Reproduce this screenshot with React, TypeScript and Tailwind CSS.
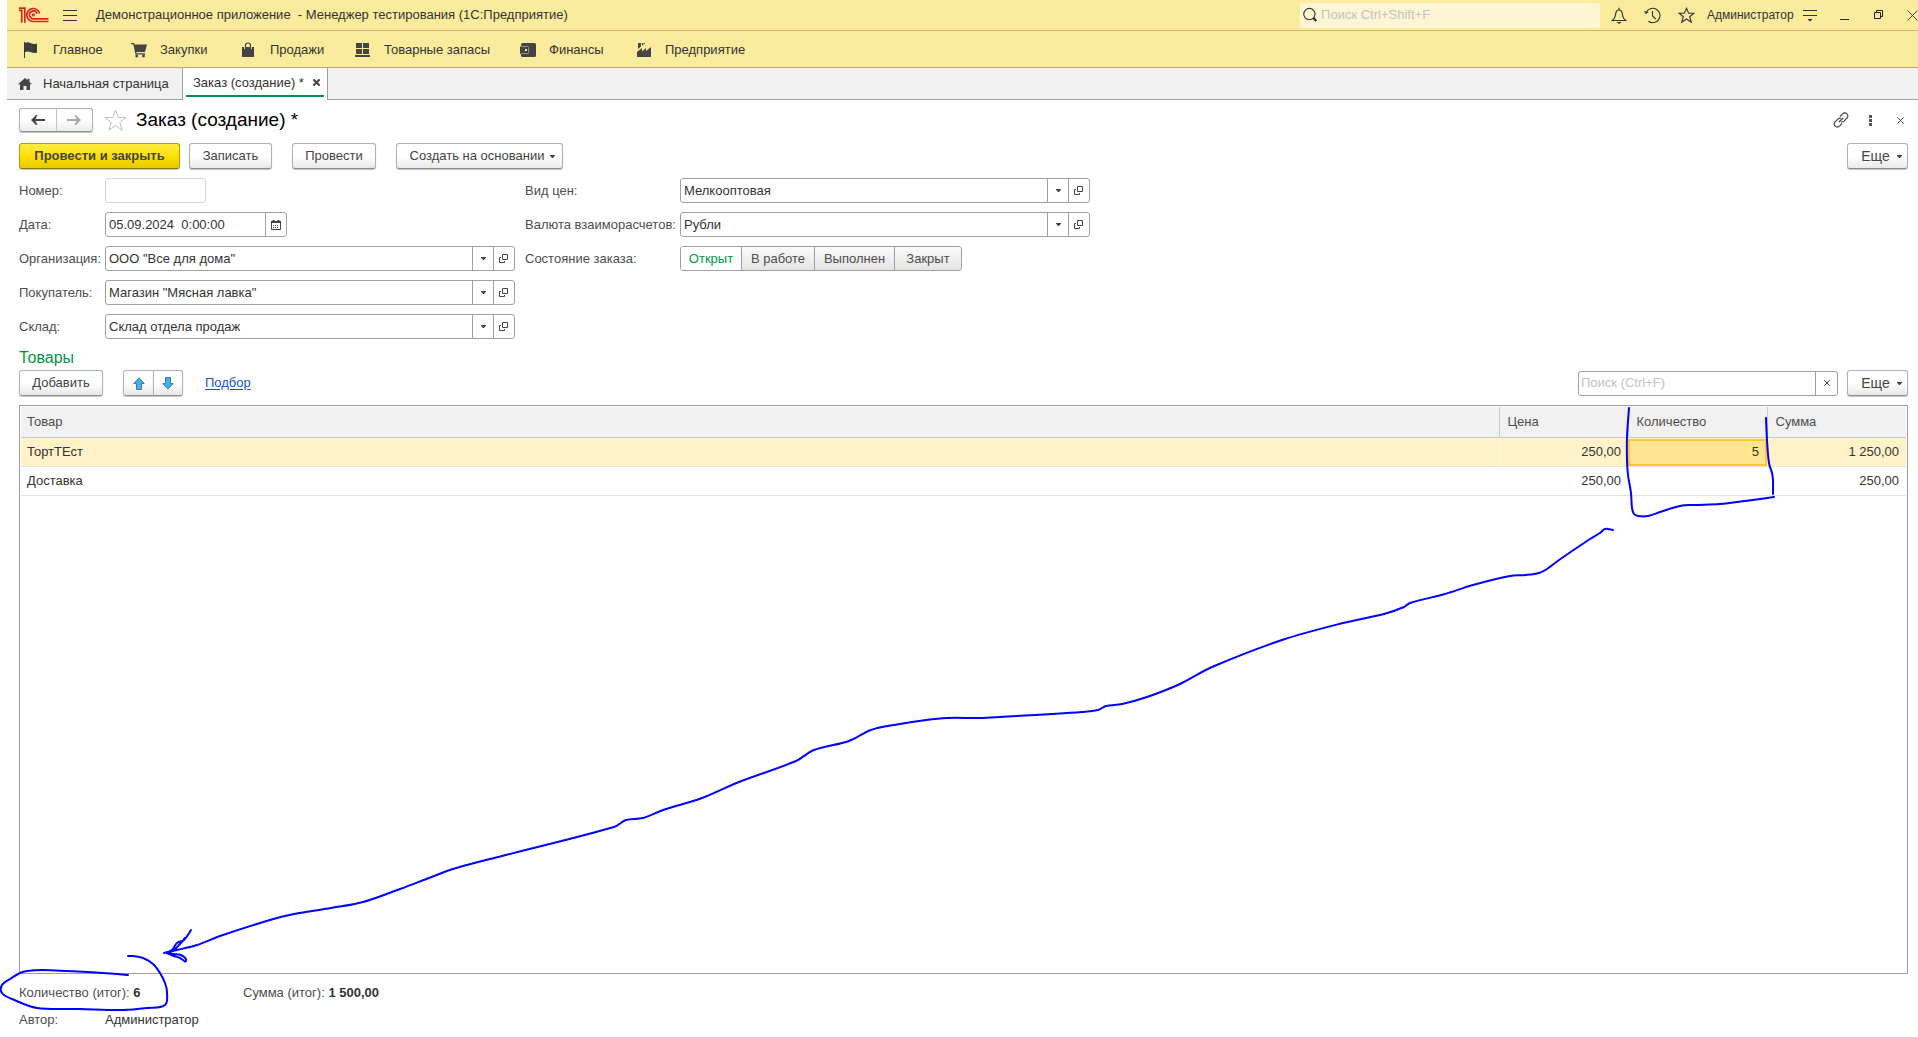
import { useId, useState, type ReactNode } from "react";

const BUTTON =
  "flex h-[26px] items-center justify-center rounded-[3px] border border-[#b0b0b0] border-b-[#8c8c8c] bg-linear-to-b from-white from-50% to-[#e9e9e9] text-[#444] shadow-[0_1px_1px_#c4c4c4]";

function Caret() {
  return (
    <svg width="5" height="3" viewBox="0 0 5 3" fill="#444" aria-hidden="true">
      <path d="M0 0h5v.6L3 3H2L0 .6z" />
    </svg>
  );
}

function OpenIcon() {
  return (
    <svg width="10" height="10" viewBox="0 0 10 10" fill="none" stroke="#444" aria-hidden="true">
      <path d="M3.500 .5h5v5h-5zM2 3.500H.5v5h5V7" />
    </svg>
  );
}

function CrossIcon({ size, width = 1 }: { size: number; width?: number }) {
  return (
    <svg width={size} height={size} viewBox="0 0 10 10" stroke="#444" strokeWidth={(width * 10) / size} aria-hidden="true">
      <path d="M.5 .5l9 9M9.500 .5l-9 9" />
    </svg>
  );
}

function Logo() {
  return (
    <svg width="30" height="16" viewBox="0 0 30 16" fill="none" stroke="#d9261c" strokeWidth="1.700" aria-hidden="true">
      <path d="M0 3.300h3.400M2.700 3v12.800M0 1.100h5.800v14.700" />
      <path d="M20.600 6.500A6.500 6.500 0 1 0 14.500 14.500H29.500" />
      <path d="M18 6.700A3.900 3.900 0 1 0 14.500 11.800H29.500" />
      <circle cx="14.400" cy="7.800" r="1" strokeWidth="1.200" />
    </svg>
  );
}

const FlagIcon = () => (
  <svg width="16" height="16" viewBox="0 0 16 16" fill="#3d3d3d" aria-hidden="true">
    <path d="M0 0h1v16H0z" />
    <path d="M1 1c2-1.200 4-.8 6 .2s4 .9 6 .2v9c-2 1-4 .8-6-.1s-4-1.200-6 0z" />
  </svg>
);

const CartIcon = () => (
  <svg width="16" height="16" viewBox="0 0 16 16" fill="#444" aria-hidden="true">
    <path d="M0 1h3.200l.5 1.500H16l-2 7.500H5.300l.3 1.200H14v1.200H4.500L2.300 2.300H0z" />
    <circle cx="5.700" cy="14" r="1.400" />
    <circle cx="12.500" cy="14" r="1.400" />
  </svg>
);

const BagIcon = () => (
  <svg width="16" height="16" viewBox="0 0 16 16" aria-hidden="true">
    <path d="M1 5h2v2h1V5h6v2h1V5h2v10H1z" fill="#444" />
    <path d="M4.500 7V3.500Q4.500 1 7 1t2.500 2.500V7" fill="none" stroke="#444" strokeWidth="1.200" />
  </svg>
);

const StockIcon = () => (
  <svg width="16" height="16" viewBox="0 0 16 16" fill="#444" aria-hidden="true">
    <path d="M1 1h6v5H1zM8 1h6v5H8zM1 7h6v5H1zM8 7h6v5H8zM0 13h15v2H0z" />
  </svg>
);

const WalletIcon = () => (
  <svg width="16" height="16" viewBox="0 0 16 16" aria-hidden="true">
    <rect x="1" y="1" width="15" height="14" rx="1.500" fill="#444" />
    <path d="M0 4h9v8H0z" fill="#444" />
    <path d="M0 4.500h7.500q1 0 1 1v5q0 1-1 1H1" fill="none" stroke="#b5ab7c" strokeWidth=".8" />
    <path d="M5 7h2v2H5z" fill="#fbeb9d" />
  </svg>
);

const FactoryIcon = () => (
  <svg width="16" height="16" viewBox="0 0 16 16" fill="#444" aria-hidden="true">
    <path d="M1 15V10l5-4v3.500L10 6v3l5-4v10z" />
    <path d="M2 1h3v3.500L2 7zM6 1h1.500v1.500L6 3.800zM8 1h1.500L8 2.300z" />
  </svg>
);

const SECTIONS: { name: string; icon: ReactNode; width: string }[] = [
  { name: "Главное", icon: <FlagIcon />, width: "w-[107px]" },
  { name: "Закупки", icon: <CartIcon />, width: "w-[110px]" },
  { name: "Продажи", icon: <BagIcon />, width: "w-[114px]" },
  { name: "Товарные запасы", icon: <StockIcon />, width: "w-[165px]" },
  { name: "Финансы", icon: <WalletIcon />, width: "w-[116px]" },
  { name: "Предприятие", icon: <FactoryIcon />, width: "w-[120px]" },
];

function TitleBar() {
  return (
    <header className="flex h-[31px] items-center border-b border-[#c9b968] bg-[#fbeb9d] pl-3">
      <Logo />
      <button aria-label="Меню" className="ml-[14px] flex w-[14px] flex-col gap-1">
        <span className="h-px bg-[#333]" />
        <span className="h-px bg-[#333]" />
        <span className="h-px bg-[#333]" />
      </button>
      <h1 className="ml-[19px] whitespace-pre">Демонстрационное приложение  - Менеджер тестирования (1С:Предприятие)</h1>
      <label className="ml-auto flex h-[25px] w-[300px] items-center gap-[4px] rounded-[2px] bg-[#fdf5d3] pl-[3px]">
        <svg width="15" height="16" viewBox="0 0 15 16" fill="none" stroke="#333" aria-label="Поиск">
          <circle cx="6.800" cy="7" r="6" strokeWidth="1.200" />
          <path d="M11 11l3 3.500" strokeWidth="2.400" />
        </svg>
        <input placeholder="Поиск Ctrl+Shift+F" className="w-full bg-transparent text-[13px] outline-none placeholder:text-[#c3c3c3]" />
      </label>
      <button aria-label="Оповещения" className="ml-[11px]">
        <svg width="16" height="17" viewBox="0 0 16 17" fill="none" stroke="#333" strokeWidth="1.200">
          <path d="M1.300 13.500h13.400c-2-1.600-3-3-3.300-6C11.200 4.500 10 3 8 3S4.800 4.500 4.600 7.500c-.3 3-1.300 4.400-3.300 6zM8 3V.8" />
          <path d="M5.500 15h5L8 17z" fill="#333" stroke="none" />
        </svg>
      </button>
      <button aria-label="История" className="ml-[17px]">
        <svg width="17" height="17" viewBox="0 0 17 17" fill="none" stroke="#333" strokeWidth="1.100">
          <path d="M2.200 5.500A7.200 7.200 0 1 1 4.500 14.300M8.500 4v5l3.300 3" />
          <path d="M0 4l1.700 3 3.100-1.800z" fill="#333" stroke="none" />
        </svg>
      </button>
      <button aria-label="Избранное" className="ml-[17px]">
        <svg width="17" height="17" viewBox="0 0 17 17" fill="none" stroke="#333" strokeWidth="1.100">
          <path d="M8.500 1.300l2.100 5h5.300l-4.200 3.400 1.600 5.600-4.800-3.300-4.800 3.300 1.600-5.600L1.100 6.300h5.300z" />
        </svg>
      </button>
      <button className="ml-3 w-[84px] text-left text-[12px]">Администратор</button>
      <button aria-label="Настройки" className="ml-3">
        <svg width="14" height="13" viewBox="0 0 14 13" fill="#333">
          <path d="M0 1h14v1H0zM0 6h14v1H0zM4.500 10h5L7 12.500z" />
        </svg>
      </button>
      <button aria-label="Свернуть" className="ml-[23px]">
        <svg width="10" height="10" viewBox="0 0 10 10" fill="#222"><path d="M0 9h9v1H0z" /></svg>
      </button>
      <button aria-label="Развернуть" className="ml-6">
        <svg width="10" height="10" viewBox="0 0 10 10" fill="none" stroke="#222"><path d="M.5 2.500h6v6h-6zM2.500 2.500v-2h6v6h-2" /></svg>
      </button>
      <button aria-label="Закрыть" className="ml-[23px]"><CrossIcon size={11} /></button>
    </header>
  );
}

function SectionBar() {
  return (
    <nav className="flex h-[37px] items-center border-b border-[#b9b060] bg-[#fbeb9d] pt-0.5 pl-[17px]">
      {SECTIONS.map((s) => (
        <a key={s.name} href="#" className={`flex items-center gap-[13px] whitespace-nowrap ${s.width}`}>
          {s.icon}
          {s.name}
        </a>
      ))}
    </nav>
  );
}

function TabBar() {
  return (
    <div className="flex h-8 items-stretch border-b border-[#a0a0a0] bg-[#f1f1f1]">
      <a href="#" className="flex w-[175px] items-center gap-[11px] pl-[11px] whitespace-nowrap">
        <svg width="14" height="12" viewBox="0 0 14 12" fill="#444" aria-hidden="true">
          <path d="M7 0l2.500 2.200V.8h2v3.100L14 6.300h-2V12H8.500V8h-3v4H2V6.300H0z" />
        </svg>
        Начальная страница
      </a>
      <div className="-mb-px flex w-[146px] flex-col border-x border-[#a0a0a0] bg-white px-[3px] pt-[2px] pb-[3px]">
        <div className="flex flex-1 items-center justify-between border-b-2 border-[#009646] pr-[4px] pl-[7px]">
          <a href="#" className="whitespace-nowrap">Заказ (создание) *</a>
          <button aria-label="Закрыть вкладку"><CrossIcon size={7} width={2} /></button>
        </div>
      </div>
    </div>
  );
}

function Arrow({ color, flip }: { color: string; flip?: boolean }) {
  return (
    <svg width="14" height="10" viewBox="0 0 14 10" fill={color} className={flip ? "rotate-180" : ""} aria-hidden="true">
      <path d="M0 5l5-5h1.500L4.500 4H14v2H4.500l2 4H5z" />
    </svg>
  );
}

function BlueArrow({ down }: { down?: boolean }) {
  return (
    <svg width="12" height="13" viewBox="0 0 12 13" fill="#48aeea" stroke="#3480b4" className={down ? "rotate-180" : ""} aria-hidden="true">
      <path d="M6 .8l5.200 5.700H8.500v6h-5v-6H.8z" />
    </svg>
  );
}

function RefField({ label, value }: { label: string; value: string }) {
  const id = useId();
  return (
    <>
      <label htmlFor={id} className="whitespace-nowrap">{label}</label>
      <div className="flex h-[25px] rounded-[3px] border border-[#a0a0a0] text-[#333]">
        <div className="relative flex flex-1">
          <select id={id} className="h-full w-full appearance-none pl-[3px] outline-none">
            <option>{value}</option>
          </select>
          <span className="pointer-events-none absolute inset-y-0 right-0 flex w-[21px] items-center justify-center border-l border-[#a0a0a0]">
            <Caret />
          </span>
        </div>
        <button aria-label={`Открыть: ${label}`} className="flex w-[21px] items-center justify-center border-l border-[#a0a0a0]">
          <OpenIcon />
        </button>
      </div>
    </>
  );
}

const STATES = [
  { name: "Открыт", width: "w-[61px]" },
  { name: "В работе", width: "w-[73px]" },
  { name: "Выполнен", width: "w-[80px]" },
  { name: "Закрыт", width: "w-[66px]" },
];

function StateSwitch() {
  const [state, setState] = useState("Открыт");
  return (
    <fieldset className="contents">
      <span id="state-label">Состояние заказа:</span>
      <div role="radiogroup" aria-labelledby="state-label" className="flex h-[25px] w-fit divide-x divide-[#a0a0a0] overflow-hidden rounded-[3px] border border-[#a0a0a0]">
        {STATES.map((s) => (
          <label
            key={s.name}
            className={`flex items-center justify-center ${s.width} ${s.name === state ? "bg-white text-[#009646]" : "bg-linear-to-b from-[#fafafa] to-[#e4e4e4]"}`}
          >
            <input type="radio" name="state" className="sr-only" checked={s.name === state} onChange={() => setState(s.name)} />
            {s.name}
          </label>
        ))}
      </div>
    </fieldset>
  );
}

function OrderFields() {
  return (
    <div className="mt-[9px] flex gap-[10px]">
      <div className="grid grid-cols-[86px_410px] items-center gap-y-[9px]">
        <label htmlFor="number">Номер:</label>
        <input id="number" readOnly className="h-[25px] w-[101px] rounded-[3px] border border-[#d4d4d4] px-[3px]" />
        <label htmlFor="date">Дата:</label>
        <div className="flex h-[25px] w-[182px] rounded-[3px] border border-[#a0a0a0] text-[#333]">
          <input id="date" defaultValue="05.09.2024  0:00:00" className="min-w-0 flex-1 pl-[3px] outline-none" />
          <button aria-label="Выбрать дату" className="flex w-[21px] items-center justify-center border-l border-[#a0a0a0]">
            <svg width="10" height="10" viewBox="0 0 10 10" fill="none" stroke="#444">
              <path d="M.5 1.500h9v8h-9z" />
              <path d="M0 2h10M2.500 0v2M7.500 0v2" strokeWidth="2" />
              <path d="M2 5.500h6M2 7.500h6" strokeDasharray="1 1" />
            </svg>
          </button>
        </div>
        <RefField label="Организация:" value={'ООО "Все для дома"'} />
        <RefField label="Покупатель:" value={'Магазин "Мясная лавка"'} />
        <RefField label="Склад:" value="Склад отдела продаж" />
      </div>
      <div className="grid grid-cols-[155px_410px] content-start items-center gap-y-[9px]">
        <RefField label="Вид цен:" value="Мелкооптовая" />
        <RefField label="Валюта взаиморасчетов:" value="Рубли" />
        <StateSwitch />
      </div>
    </div>
  );
}

function MoreButton() {
  return <button className={`${BUTTON} w-[61px] gap-[7px] pl-2 text-[14px]`}>Еще <Caret /></button>;
}

const ROWS = [
  { item: "ТортТЕст", price: "250,00", count: "5", sum: "1 250,00" },
  { item: "Доставка", price: "250,00", count: "", sum: "250,00" },
];

function GoodsTable() {
  return (
    <div className="mt-[9px] flex-1 border border-[#a0a0a0] p-px">
      <table className="w-full table-fixed border-collapse text-[#333]">
        <colgroup>
          <col />
          <col className="w-[129px]" />
          <col className="w-[139px]" />
          <col className="w-[139px]" />
        </colgroup>
        <thead>
          <tr className="h-[30px] border-b border-[#c8c8c8] bg-[#f1f1f1] text-left text-[#4d4d4d]">
            <th className="border-r border-[#c8c8c8] px-[6px] font-normal">Товар</th>
            <th className="border-r border-[#c8c8c8] px-2 font-normal">Цена</th>
            <th className="border-r border-[#c8c8c8] px-2 font-normal">Количество</th>
            <th className="px-2 font-normal">Сумма</th>
          </tr>
        </thead>
        <tbody>
          {ROWS.map((r, i) => {
            const active = i === 0;
            return (
              <tr key={r.item} className={`h-[29px] border-b border-[#e4e4e4] text-right ${active ? "bg-[#fff2c8]" : ""}`}>
                <td className={`px-[6px] text-left ${active ? "border-r border-[#fbf8ec]" : ""}`}>{r.item}</td>
                <td className="px-[7px]">{r.price}</td>
                <td className={active ? "h-[29px] p-0" : "px-[7px]"}>
                  {active ? <div className="mt-px flex h-[27px] items-center justify-end border-2 border-[#fcc82a] bg-[#ffe591] px-[6px]">{r.count}</div> : r.count}
                </td>
                <td className="px-[7px]">{r.sum}</td>
              </tr>
            );
          })}
        </tbody>
      </table>
    </div>
  );
}

type Point = [number, number];

const STROKES: Point[][] = [
  [[1629, 408], [1627, 437], [1627, 460], [1628, 475], [1631, 493], [1632, 508], [1634, 514], [1638, 516], [1648, 516], [1660, 512], [1680, 506], [1693, 505], [1720, 504], [1745, 501], [1774, 497]],
  [[1766, 418], [1767, 440], [1769, 463], [1772, 473], [1773, 480], [1773, 494]],
  [[1613, 530], [1605, 529], [1600, 533], [1590, 539], [1559, 560], [1547, 569], [1539, 573], [1526, 575], [1510, 576], [1473, 585], [1445, 594], [1410, 603], [1404, 607], [1384, 614], [1343, 623], [1282, 640], [1212, 667], [1180, 684], [1147, 697], [1122, 704], [1106, 706], [1098, 710], [1082, 712], [1000, 717], [980, 718], [947, 718], [926, 720], [894, 725], [871, 730], [849, 741], [814, 750], [796, 761], [739, 782], [702, 798], [663, 810], [643, 818], [626, 820], [614, 827], [502, 856], [453, 869], [429, 878], [400, 889], [363, 902], [331, 908], [294, 914], [270, 920], [220, 936], [197, 945], [177, 950], [164, 953]],
  [[191, 930], [184, 940], [177, 943], [172, 950], [167, 953], [174, 950], [180, 944], [185, 938]],
  [[167, 953], [174, 956], [180, 958], [186, 961], [181, 955], [172, 954], [167, 953]],
  [[128, 975], [103, 973], [67, 971], [43, 970], [27, 971], [20, 973], [10, 979], [2, 985], [2, 993], [12, 999], [37, 1008], [80, 1009], [123, 1010], [147, 1008], [165, 1005], [167, 992], [165, 983], [160, 973], [153, 964], [143, 958], [133, 956], [128, 956]],
];

// Smooth curve through the points; handle length follows the segment length, so uneven spacing leaves no kinks.
function smooth(points: Point[]) {
  const last = points.length - 1;
  const tangent = (i: number): Point => {
    const a = points[Math.max(0, i - 1)];
    const b = points[Math.min(last, i + 1)];
    const length = Math.hypot(b[0] - a[0], b[1] - a[1]) || 1;
    return [(b[0] - a[0]) / length, (b[1] - a[1]) / length];
  };
  let d = `M${points[0].join(" ")}`;
  for (let i = 0; i < last; i++) {
    const [b, c] = [points[i], points[i + 1]];
    const [t, u] = [tangent(i), tangent(i + 1)];
    const h = Math.hypot(c[0] - b[0], c[1] - b[1]) / 3;
    d += `C${b[0] + t[0] * h} ${b[1] + t[1] * h} ${c[0] - u[0] * h} ${c[1] - u[1] * h} ${c[0]} ${c[1]}`;
  }
  return d;
}

function PenMarks() {
  return (
    <svg viewBox="0 0 1918 1037" preserveAspectRatio="none" fill="none" stroke="#0000ff" strokeWidth="2" strokeLinecap="round" className="pointer-events-none absolute inset-0 h-full w-full" aria-hidden="true">
      {STROKES.map((s, i) => <path key={i} d={smooth(s)} />)}
    </svg>
  );
}

export default function App() {
  return (
    <div className="relative flex min-h-screen flex-col overflow-hidden bg-white pl-[7px] font-['Liberation_Sans',Arial,sans-serif] text-[13px] leading-[18px] text-[#333]">
      <TitleBar />
      <SectionBar />
      <TabBar />
      <main className="flex flex-1 flex-col pt-2 pr-[10px] pb-2 pl-3 text-[#4d4d4d]">
        <div className="flex h-6 items-center">
          <div className="flex h-6 w-[74px] divide-x divide-[#c4c4c4] rounded-[3px] border border-[#b0b0b0] border-b-[#8c8c8c] bg-linear-to-b from-white from-50% to-[#ececec] shadow-[0_1px_1px_#c4c4c4]">
            <button aria-label="Назад" className="flex flex-1 items-center justify-center"><Arrow color="#444" /></button>
            <button aria-label="Вперед" className="flex flex-1 items-center justify-center"><Arrow color="#aaa" flip /></button>
          </div>
          <button aria-label="В избранное" className="ml-[11px]">
            <svg width="23" height="22" viewBox="0 0 23 22" fill="none" stroke="#b9bfc6">
              <path d="M11.500 1l2.700 7.500h8l-6.400 4.900 2.300 7.800-6.600-4.700-6.600 4.700 2.300-7.800L.8 8.500h8z" />
            </svg>
          </button>
          <h2 className="ml-[9px] text-[19px] text-black">Заказ (создание) *</h2>
          <button aria-label="Ссылка" className="ml-auto">
            <svg width="16" height="16" viewBox="0 0 16 16" fill="none" stroke="#444" strokeWidth="1.200">
              <path d="M7 4.500l2.600-2.600a2.900 2.900 0 0 1 4.300 0 2.900 2.900 0 0 1 0 4.300L11 9.100Q9.600 10.200 8 9.700M9 11.500l-2.600 2.600a2.900 2.900 0 0 1-4.300 0 2.900 2.900 0 0 1 0-4.300L5 6.900q1.400-1.100 3-.6M6 10l4-4" />
            </svg>
          </button>
          <button aria-label="Еще действия" className="ml-5">
            <svg width="3" height="11" viewBox="0 0 3 11" fill="#555"><path d="M0 0h3v3H0zM0 4h3v3H0zM0 8h3v3H0z" /></svg>
          </button>
          <button aria-label="Закрыть форму" className="mr-1 ml-[25px]"><CrossIcon size={7} /></button>
        </div>

        <div className="mt-[11px] flex">
          <button className="flex h-[26px] w-[161px] items-center justify-center rounded-[3px] border border-[#b59d00] border-b-[#8c7a00] bg-linear-to-b from-[#ffec3d] via-[#ffe000] to-[#e8c900] font-bold text-[#444] shadow-[0_1px_1px_#c4c4c4]">
            Провести и закрыть
          </button>
          <button className={`${BUTTON} ml-[9px] w-[83px]`}>Записать</button>
          <button className={`${BUTTON} ml-5 w-[84px]`}>Провести</button>
          <button className={`${BUTTON} ml-5 w-[167px] gap-[6px] pl-[6px]`}>Создать на основании <Caret /></button>
          <div className="ml-auto"><MoreButton /></div>
        </div>

        <OrderFields />

        <h3 className="mt-[10px] text-[16px] text-[#009646]">Товары</h3>
        <div className="mt-[3px] flex items-center">
          <button className={`${BUTTON} w-[84px]`}>Добавить</button>
          <div className="ml-5 flex">
            <button aria-label="Переместить вверх" className={`${BUTTON} w-[31px] rounded-r-none`}><BlueArrow /></button>
            <button aria-label="Переместить вниз" className={`${BUTTON} -ml-px w-[30px] rounded-l-none`}><BlueArrow down /></button>
          </div>
          <a href="#" className="ml-[22px] text-[#1a56b8] underline underline-offset-2">Подбор</a>
          <div className="ml-auto flex h-[25px] w-[260px] rounded-[3px] border border-[#a0a0a0]">
            <input aria-label="Поиск" placeholder="Поиск (Ctrl+F)" className="min-w-0 flex-1 pl-[2px] outline-none placeholder:text-[#c3c3c3]" />
            <button aria-label="Очистить" className="flex w-[22px] items-center justify-center border-l border-[#a0a0a0]"><CrossIcon size={6} /></button>
          </div>
          <div className="ml-[9px]"><MoreButton /></div>
        </div>

        <GoodsTable />

        <footer className="mt-[10px] flex flex-col gap-[9px]">
          <div className="flex">
            <p className="w-[224px]">Количество (итог): <b className="text-[#333]">6</b></p>
            <p>Сумма (итог): <b className="text-[#333]">1 500,00</b></p>
          </div>
          <p className="flex"><span className="w-[86px]">Автор:</span><span className="text-[#333]">Администратор</span></p>
        </footer>
      </main>
      <PenMarks />
    </div>
  );
}
